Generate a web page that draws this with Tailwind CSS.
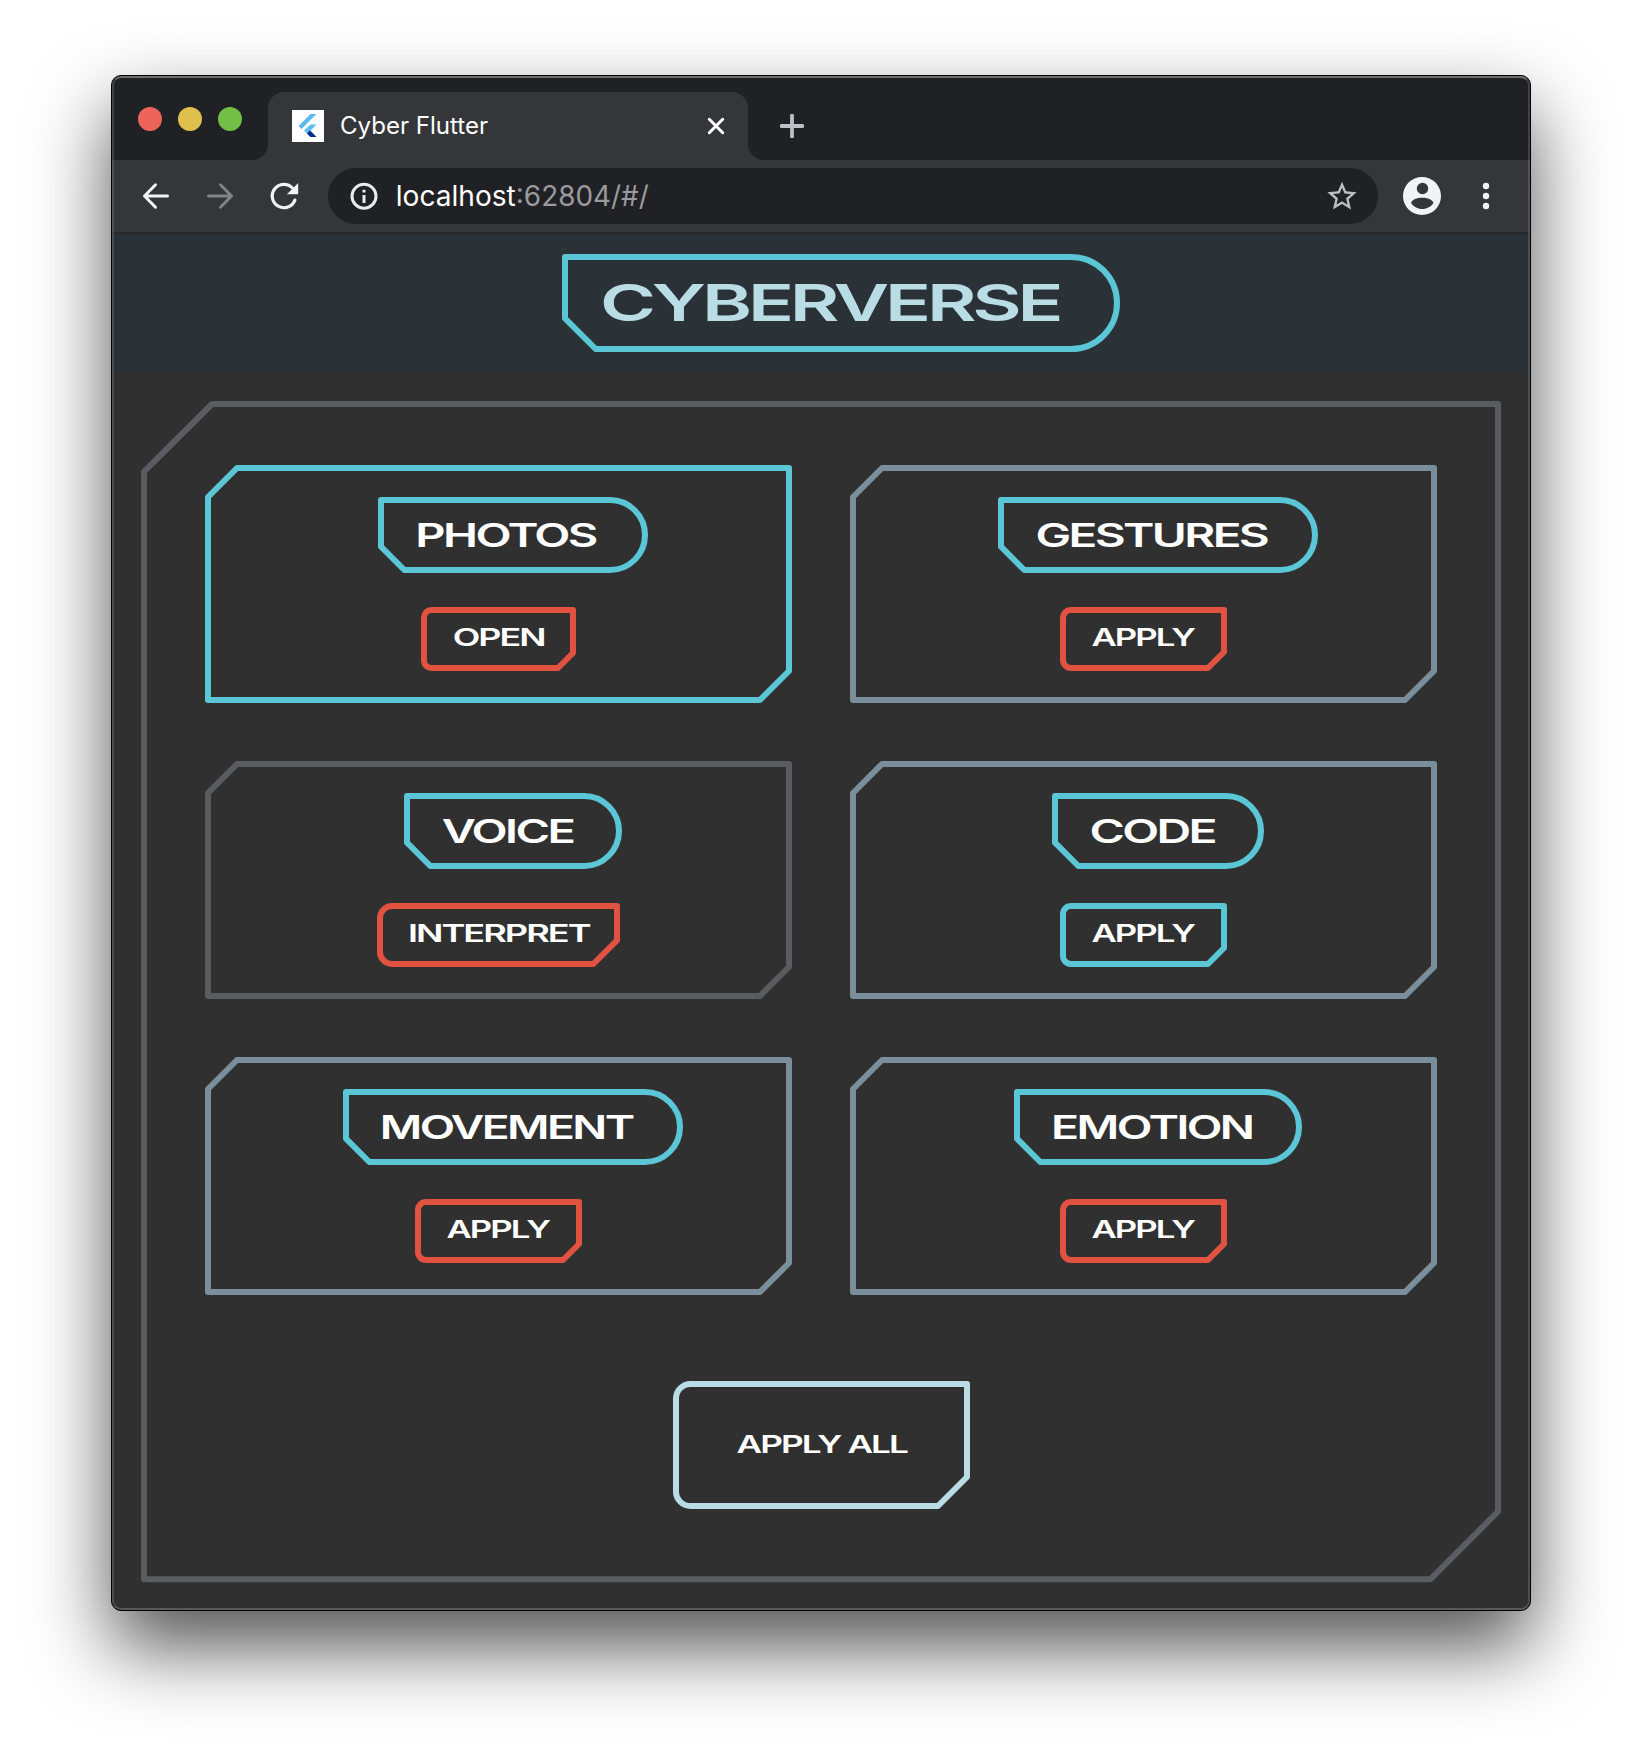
<!DOCTYPE html>
<html lang="en">
<head>
<meta charset="utf-8">
<title>Cyber Flutter</title>
<script src="https://cdn.jsdelivr.net/npm/@tailwindcss/browser@4"></script>
</head>
<body class="w-[1642px] h-[1758px] bg-white overflow-hidden flex items-start pt-[75px] pl-[111px] font-['Inter',sans-serif]">
<div class="relative w-[1420px] h-[1536px] shrink-0 flex flex-col rounded-[10px] border border-black bg-[#303030] overflow-hidden shadow-[0_36px_78px_rgba(0,0,0,0.68)]">

  <!-- Tab strip -->
  <div class="h-[84px] shrink-0 bg-[#202124] flex items-end">
    <div class="w-[156px] h-full flex gap-4 pl-[26px] pt-[31px]">
      <span class="size-6 rounded-full bg-[#ed655a]"></span>
      <span class="size-6 rounded-full bg-[#e0c04c]"></span>
      <span class="size-6 rounded-full bg-[#72be47]"></span>
    </div>
    <div class="relative w-[480px] h-[68px] rounded-t-2xl bg-[#35363a] flex items-center pl-6 pr-6">
      <svg class="absolute -left-4 bottom-0 size-4" viewBox="0 0 16 16"><path d="M16 0V16H0A16 16 0 0 0 16 0Z" fill="#35363a"/></svg>
      <svg class="absolute -right-4 bottom-0 size-4" viewBox="0 0 16 16"><path d="M0 0V16H16A16 16 0 0 1 0 0Z" fill="#35363a"/></svg>
      <svg class="size-8 shrink-0" viewBox="0 0 32 32"><path fill="#fff" d="M0 0h32v32H0z"/><path d="M18.500 4H24.500L9.500 19L6.500 16Z" fill="#5cb8f2"/><path d="M18.500 14.500H24.500L18.500 20.500L24 27H18.500L12 20.500Z" fill="#5cbcf5"/><path d="M15 23.500L18 20.500L24.500 27H18.500Z" fill="#0d2a8a"/></svg>
      <svg class="ml-4 h-8 w-[160px] overflow-visible" viewBox="0 0 160 32"><text x="0" y="24" font-size="23.800" font-weight="420" textLength="148" lengthAdjust="spacingAndGlyphs" fill="#fff">Cyber Flutter</text></svg>
      <svg class="ml-auto size-4 overflow-visible" viewBox="0 0 16 16"><path d="M1.300 1.300L14.700 14.700M14.700 1.300L1.300 14.700" stroke="#fff" stroke-width="3" stroke-linecap="round"/></svg>
    </div>
    <div class="h-[68px] flex items-center pl-8">
      <svg class="size-6" viewBox="0 0 24 24"><path d="M12 1.500V22.500M1.500 12H22.500" stroke="#bdc1c6" stroke-width="3.800" stroke-linecap="round"/></svg>
    </div>
  </div>

  <!-- Toolbar -->
  <div class="h-[74px] shrink-0 bg-[#35363a] border-b-2 border-[#2a2829] flex items-center">
    <svg class="ml-6 size-10" viewBox="0 0 40 40" fill="none" stroke="#f1f3f4" stroke-width="3" stroke-linecap="round" stroke-linejoin="round"><path d="M31.500 20H8.500M19.500 8.800L8.500 20L19.500 31.200"/></svg>
    <svg class="ml-6 size-10" viewBox="0 0 40 40" fill="none" stroke="#828386" stroke-width="3" stroke-linecap="round" stroke-linejoin="round"><path d="M8.500 20H31.500M20.500 8.800L31.500 20L20.500 31.200"/></svg>
    <svg class="ml-6 size-10" viewBox="0 0 40 40" fill="none" stroke="#f1f3f4" stroke-width="3.200" stroke-linecap="round"><path d="M30.900 24.100A11.700 11.700 0 1 1 28.500 12"/><path d="M34.200 7V18.300H22.900Z" fill="#f1f3f4" stroke="none"/></svg>
    <div class="ml-6 w-[1050px] h-14 rounded-full bg-[#202124] flex items-center pl-[22px] pr-5">
      <svg class="size-[28px]" viewBox="0 0 28 28"><circle cx="14" cy="14.200" r="12" fill="none" stroke="#e8eaed" stroke-width="3"/><path d="M14 13V21M14 7.700V10.500" stroke="#e8eaed" stroke-width="3"/></svg>
      <svg class="ml-[17px] h-10 w-[280px] overflow-visible" viewBox="0 0 280 40"><text x="0.800" y="30" font-size="28" font-weight="420" textLength="120" lengthAdjust="spacingAndGlyphs" fill="#fff">localhost</text><text x="120.800" y="30" font-size="28" font-weight="400" textLength="133" lengthAdjust="spacingAndGlyphs" fill="#9a9b9d">:62804/#/</text></svg>
      <svg class="ml-auto w-[32px] h-8" viewBox="0 0 32 32"><path transform="translate(-1.600 -1.300) scale(1.467)" fill="#bdbebf" d="M22 9.240l-7.190-.620L12 2 9.190 8.630 2 9.240l5.460 4.730L5.820 21 12 17.270 18.180 21l-1.630-7.030L22 9.240zM12 15.400l-3.760 2.270 1-4.280-3.320-2.880 4.380-.380L12 6.100l1.710 4.040 4.380.380-3.320 2.880 1 4.280L12 15.400z"/></svg>
    </div>
    <svg class="ml-6 size-10" viewBox="0 0 40 40"><circle cx="20" cy="20" r="19" fill="#f1f3f4"/><circle cx="20.500" cy="12.500" r="5.700" fill="#35363a"/><path d="M9 27C10 23.500 15 21.800 20.200 21.800S30.500 23.500 31.500 27C29 30.500 25 33 20.200 33S11.500 30.500 9 27Z" fill="#35363a"/></svg>
    <svg class="ml-6 size-10" viewBox="0 0 40 40" fill="#f1f3f4"><circle cx="20" cy="10" r="3.200"/><circle cx="20" cy="20" r="3.200"/><circle cx="20" cy="30" r="3.200"/></svg>
  </div>

  <!-- App header -->
  <header class="h-[138px] shrink-0 bg-[#2a3238] flex justify-center pt-[22.670px] pl-10 [&_text]:tracking-[-0.055em]">
    <svg class="w-[552px] h-[92px] overflow-visible" viewBox="0 0 552 92"><path d="M0 0H506A46 46 0 0 1 506 92H30.700L0 61.300Z" fill="none" stroke="#5bc6d6" stroke-width="6" stroke-linejoin="round"/><text x="35" y="64.300" font-size="50.500" font-weight="570" textLength="459.500" lengthAdjust="spacingAndGlyphs" fill="#b9dce5">CYBERVERSE</text></svg>
  </header>

  <!-- Control panel -->
  <main class="px-8 pt-[31.670px] [&_text]:tracking-[-0.055em]">
    <section class="relative w-[1354px] h-[1175.330px] px-16 pt-16 flex flex-col items-center">
      <svg class="absolute inset-0 size-full overflow-visible" viewBox="0 0 1354 1175.330"><path d="M68 0H1354V1107.600L1286.300 1175.330H0V67.700Z" fill="none" stroke="#595c60" stroke-width="6" stroke-linejoin="round"/></svg>

      <div class="grid grid-cols-[581px_581px] gap-16">
        <article class="relative h-[232px] pt-8 flex flex-col items-center gap-10">
          <svg class="absolute inset-0 size-full overflow-visible" viewBox="0 0 581 232"><path d="M29 0H581V203L552 232H0V29Z" fill="none" stroke="#5bc6d6" stroke-width="6" stroke-linejoin="round"/></svg>
          <svg class="ml-[29px] w-[264px] h-[70px] overflow-visible" viewBox="0 0 264 70"><path d="M0 0H229A35 35 0 0 1 229 70H23.300L0 46.700Z" fill="none" stroke="#5bc6d6" stroke-width="6" stroke-linejoin="round"/><text x="34.300" y="46.700" font-size="32.300" font-weight="570" textLength="180.500" lengthAdjust="spacingAndGlyphs" fill="#fff">PHOTOS</text></svg>
          <svg class="w-[149px] h-[58px] overflow-visible" viewBox="0 0 149 58"><path d="M7.500 0H149V43L134 58H7.500A7.500 7.500 0 0 1 0 50.500V7.500A7.500 7.500 0 0 1 7.500 0Z" fill="none" stroke="#e15241" stroke-width="6" stroke-linejoin="round"/><text x="28.700" y="36.300" font-size="24" font-weight="560" textLength="91.800" lengthAdjust="spacingAndGlyphs" fill="#fff">OPEN</text></svg>
        </article>

        <article class="relative h-[232px] pt-8 flex flex-col items-center gap-10">
          <svg class="absolute inset-0 size-full overflow-visible" viewBox="0 0 581 232"><path d="M29 0H581V203L552 232H0V29Z" fill="none" stroke="#7b8e9b" stroke-width="6" stroke-linejoin="round"/></svg>
          <svg class="ml-[29px] w-[314px] h-[70px] overflow-visible" viewBox="0 0 314 70"><path d="M0 0H279A35 35 0 0 1 279 70H23.300L0 46.700Z" fill="none" stroke="#5bc6d6" stroke-width="6" stroke-linejoin="round"/><text x="34.500" y="46.700" font-size="32.300" font-weight="570" textLength="231.700" lengthAdjust="spacingAndGlyphs" fill="#fff">GESTURES</text></svg>
          <svg class="w-[161px] h-[58px] overflow-visible" viewBox="0 0 161 58"><path d="M8 0H161V42L145 58H8A8 8 0 0 1 0 50V8A8 8 0 0 1 8 0Z" fill="none" stroke="#e15241" stroke-width="6" stroke-linejoin="round"/><text x="28.500" y="36.300" font-size="24" font-weight="560" textLength="102.500" lengthAdjust="spacingAndGlyphs" fill="#fff">APPLY</text></svg>
        </article>

        <article class="relative h-[232px] pt-8 flex flex-col items-center gap-10">
          <svg class="absolute inset-0 size-full overflow-visible" viewBox="0 0 581 232"><path d="M29 0H581V203L552 232H0V29Z" fill="none" stroke="#595c60" stroke-width="6" stroke-linejoin="round"/></svg>
          <svg class="ml-[29px] w-[212px] h-[70px] overflow-visible" viewBox="0 0 212 70"><path d="M0 0H177A35 35 0 0 1 177 70H23.300L0 46.700Z" fill="none" stroke="#5bc6d6" stroke-width="6" stroke-linejoin="round"/><text x="34.800" y="46.700" font-size="32.300" font-weight="570" textLength="131.500" lengthAdjust="spacingAndGlyphs" fill="#fff">VOICE</text></svg>
          <svg class="w-[237px] h-[58px] overflow-visible" viewBox="0 0 237 58"><path d="M12 0H237V34.300L213.300 58H12A12 12 0 0 1 0 46V12A12 12 0 0 1 12 0Z" fill="none" stroke="#e15241" stroke-width="6" stroke-linejoin="round"/><text x="28" y="36.300" font-size="24" font-weight="560" textLength="181.500" lengthAdjust="spacingAndGlyphs" fill="#fff">INTERPRET</text></svg>
        </article>

        <article class="relative h-[232px] pt-8 flex flex-col items-center gap-10">
          <svg class="absolute inset-0 size-full overflow-visible" viewBox="0 0 581 232"><path d="M29 0H581V203L552 232H0V29Z" fill="none" stroke="#7b8e9b" stroke-width="6" stroke-linejoin="round"/></svg>
          <svg class="ml-[29px] w-[206px] h-[70px] overflow-visible" viewBox="0 0 206 70"><path d="M0 0H171A35 35 0 0 1 171 70H23.300L0 46.700Z" fill="none" stroke="#5bc6d6" stroke-width="6" stroke-linejoin="round"/><text x="34.500" y="46.700" font-size="32.300" font-weight="570" textLength="125.500" lengthAdjust="spacingAndGlyphs" fill="#fff">CODE</text></svg>
          <svg class="w-[161px] h-[58px] overflow-visible" viewBox="0 0 161 58"><path d="M8 0H161V42L145 58H8A8 8 0 0 1 0 50V8A8 8 0 0 1 8 0Z" fill="none" stroke="#5bc6d6" stroke-width="6" stroke-linejoin="round"/><text x="28.500" y="36.300" font-size="24" font-weight="560" textLength="102.500" lengthAdjust="spacingAndGlyphs" fill="#fff">APPLY</text></svg>
        </article>

        <article class="relative h-[232px] pt-8 flex flex-col items-center gap-10">
          <svg class="absolute inset-0 size-full overflow-visible" viewBox="0 0 581 232"><path d="M29 0H581V203L552 232H0V29Z" fill="none" stroke="#7b8e9b" stroke-width="6" stroke-linejoin="round"/></svg>
          <svg class="ml-[29px] w-[334px] h-[70px] overflow-visible" viewBox="0 0 334 70"><path d="M0 0H299A35 35 0 0 1 299 70H23.300L0 46.700Z" fill="none" stroke="#5bc6d6" stroke-width="6" stroke-linejoin="round"/><text x="33.700" y="46.700" font-size="32.300" font-weight="570" textLength="253" lengthAdjust="spacingAndGlyphs" fill="#fff">MOVEMENT</text></svg>
          <svg class="w-[161px] h-[58px] overflow-visible" viewBox="0 0 161 58"><path d="M8 0H161V42L145 58H8A8 8 0 0 1 0 50V8A8 8 0 0 1 8 0Z" fill="none" stroke="#e15241" stroke-width="6" stroke-linejoin="round"/><text x="28.500" y="36.300" font-size="24" font-weight="560" textLength="102.500" lengthAdjust="spacingAndGlyphs" fill="#fff">APPLY</text></svg>
        </article>

        <article class="relative h-[232px] pt-8 flex flex-col items-center gap-10">
          <svg class="absolute inset-0 size-full overflow-visible" viewBox="0 0 581 232"><path d="M29 0H581V203L552 232H0V29Z" fill="none" stroke="#7b8e9b" stroke-width="6" stroke-linejoin="round"/></svg>
          <svg class="ml-[29px] w-[282px] h-[70px] overflow-visible" viewBox="0 0 282 70"><path d="M0 0H247A35 35 0 0 1 247 70H23.300L0 46.700Z" fill="none" stroke="#5bc6d6" stroke-width="6" stroke-linejoin="round"/><text x="34" y="46.700" font-size="32.300" font-weight="570" textLength="201.500" lengthAdjust="spacingAndGlyphs" fill="#fff">EMOTION</text></svg>
          <svg class="w-[161px] h-[58px] overflow-visible" viewBox="0 0 161 58"><path d="M8 0H161V42L145 58H8A8 8 0 0 1 0 50V8A8 8 0 0 1 8 0Z" fill="none" stroke="#e15241" stroke-width="6" stroke-linejoin="round"/><text x="28.500" y="36.300" font-size="24" font-weight="560" textLength="102.500" lengthAdjust="spacingAndGlyphs" fill="#fff">APPLY</text></svg>
        </article>
      </div>

      <svg class="mt-[92px] w-[291px] h-[122px] overflow-visible" viewBox="0 0 291 122"><path d="M14.500 0H291V93L262 122H14.500A14.500 14.500 0 0 1 0 107.500V14.500A14.500 14.500 0 0 1 14.500 0Z" fill="none" stroke="#b9dce5" stroke-width="6" stroke-linejoin="round"/><text x="60.500" y="68.700" font-size="24" font-weight="560" textLength="170.500" lengthAdjust="spacingAndGlyphs" fill="#fff">APPLY ALL</text></svg>
    </section>
  </main>

  <!-- Bevel along the window edge -->
  <div class="absolute inset-0 rounded-[9px] border-2 border-white/15 border-t-white/35 border-b-white/20 pointer-events-none"></div>
</div>
</body>
</html>
